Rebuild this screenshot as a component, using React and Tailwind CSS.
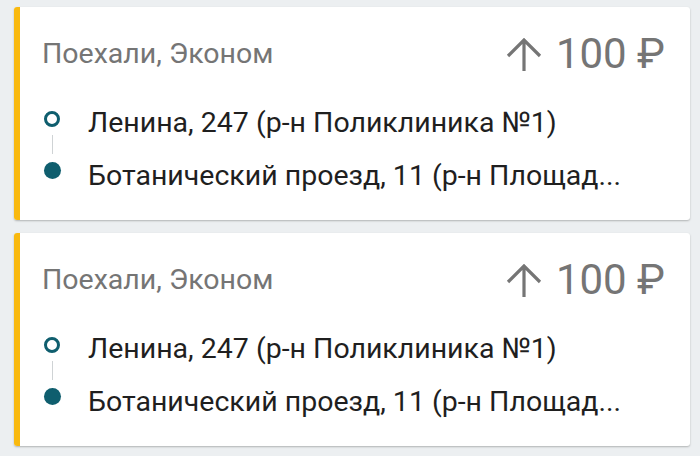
import React from "react";

function Arrow() {
  return (
    <svg width="36" height="33" viewBox="0 0 36 33" className="shrink-0">
      <path d="M18 2 V33 M2 18 L18 2 L34 18" fill="none" stroke="#757575" strokeWidth="3.2" strokeLinejoin="miter" />
    </svg>
  );
}

function Card() {
  return (
    <div className="flex h-[213px] rounded-[3px] bg-white shadow-[0_1px_2px_rgba(0,0,0,0.25)] overflow-hidden">
      <div className="w-[6px] shrink-0 bg-[#f9b90f]" />
      <div className="flex-1 pl-[22px] pr-[25px] pt-[24px]">
        <div className="flex items-center justify-between h-[46px]">
          <div className="text-[28.5px] text-[#757575] leading-none">Поехали, Эконом</div>
          <div className="flex items-center gap-[14px] text-[42px] text-[#757575] leading-none">
            <Arrow />
            <span>100 ₽</span>
          </div>
        </div>
        <div className="flex mt-[30px]">
          <div className="w-[20px] flex flex-col items-center pt-[4px]">
            <div className="w-[16px] h-[16px] rounded-full border-[3.5px] border-[#0f5e6e]" />
            <div className="w-px h-[19px] mt-[8px] mb-[8px] bg-[#cfd3d5]" />
            <div className="w-[17px] h-[17px] rounded-full bg-[#0f5e6e]" />
          </div>
          <div className="ml-[26px] flex flex-col gap-[22px] text-[28.5px] text-[#1f1f1f] leading-[31px] min-w-0">
            <div className="whitespace-nowrap">Ленина, 247 (р-н Поликлиника №1)</div>
            <div className="whitespace-nowrap">Ботанический проезд, 11 (р-н Площад...</div>
          </div>
        </div>
      </div>
    </div>
  );
}

export default function App() {
  return (
    <div className="w-[700px] h-[456px] bg-[#eceff1] pt-[7px] pl-[14px] pr-[10px] flex flex-col gap-[13px] overflow-hidden" style={{ fontFamily: "Roboto, sans-serif" }}>
      <Card />
      <Card />
    </div>
  );
}
